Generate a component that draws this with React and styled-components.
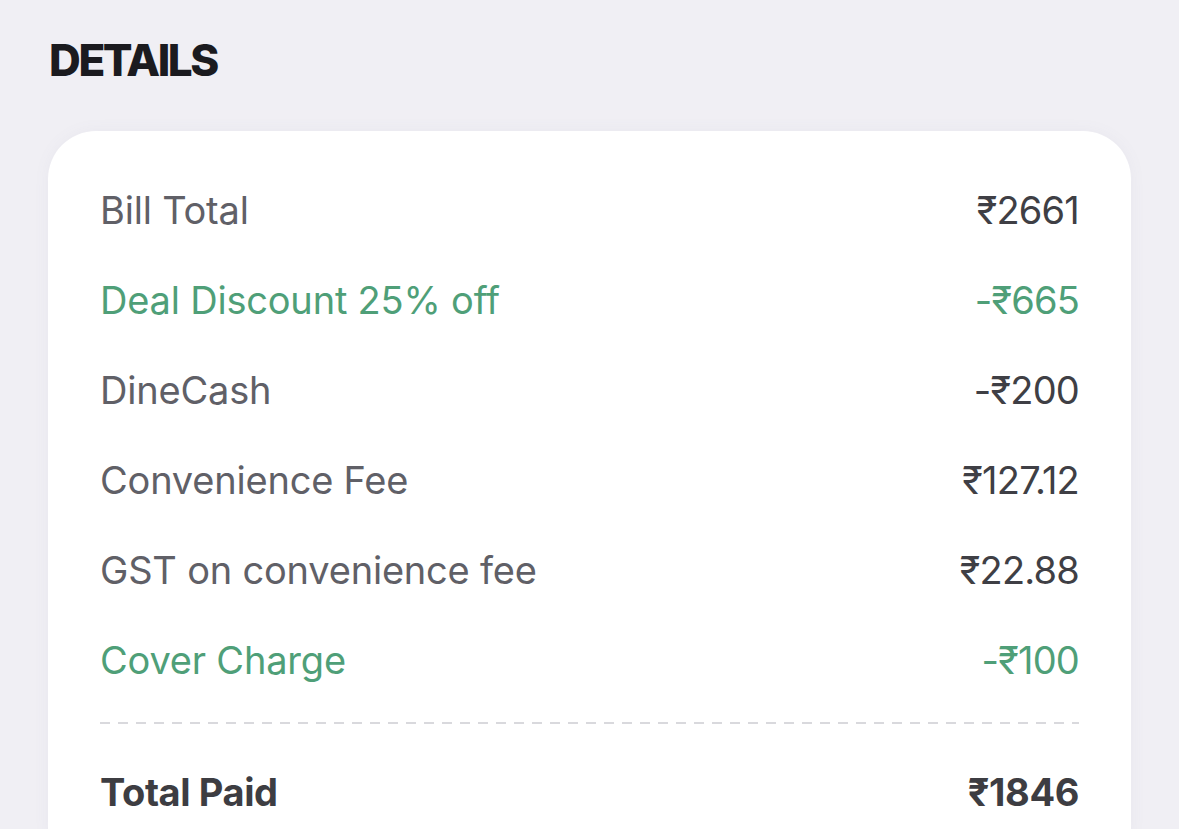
import React from 'react'
import styled, { createGlobalStyle } from 'styled-components'

const rows = [
  { label: 'Bill Total', value: '₹2661' },
  { label: 'Deal Discount 25% off', value: '-₹665', green: true },
  { label: 'DineCash', value: '-₹200' },
  { label: 'Convenience Fee', value: '₹127.12' },
  { label: 'GST on convenience fee', value: '₹22.88' },
  { label: 'Cover Charge', value: '-₹100', green: true },
]

function App() {
  return (
    <Page>
      <GlobalStyle />
      <Heading>DETAILS</Heading>
      <Card>
        {rows.map(r => (
          <Row key={r.label}>
            <Label $green={r.green}>{r.label}</Label>
            <Value $green={r.green}>{r.value}</Value>
          </Row>
        ))}
        <Divider />
        <TotalRow>
          <span>Total Paid</span>
          <span>₹1846</span>
        </TotalRow>
      </Card>
    </Page>
  )
}

export default App

const GlobalStyle = createGlobalStyle`
  html, body {
    margin: 0;
    padding: 0;
    background: #f0eff4;
    overflow: hidden;
  }
  body {
    font-family: Inter, "Noto Sans", sans-serif;
  }
`

const Page = styled.div`
  height: 829px;
  padding: 36px 48px 0 48px;
  box-sizing: border-box;
  display: flex;
  flex-direction: column;
  overflow: hidden;
`

const Heading = styled.h1`
  margin: 0 0 0 1px;
  font-size: 44px;
  font-weight: 800;
  letter-spacing: -2.4px;
  line-height: 48px;
  color: #1b1b1f;
`

const Card = styled.div`
  flex: 1;
  margin-top: 47px;
  background: #fff;
  border-radius: 48px 48px 0 0;
  padding: 34px 52px 0 52px;
  box-shadow: 0 0 16px rgba(120, 120, 150, 0.06);
`

const Row = styled.div`
  display: flex;
  justify-content: space-between;
  align-items: center;
  height: 90px;
  font-size: 38px;
  letter-spacing: -0.2px;
`

const Label = styled.span`
  color: ${p => (p.$green ? '#4f9f78' : '#606067')};
`

const Value = styled.span`
  color: ${p => (p.$green ? '#4f9f78' : '#3f3f45')};
  letter-spacing: -0.8px;
`

const Divider = styled.div`
  margin-top: 17px;
  height: 2px;
  background-image: linear-gradient(to right, #d9d9dd 0 10px, transparent 10px 18px);
  background-size: 18px 2px;
  background-repeat: repeat-x;
`

const TotalRow = styled.div`
  display: flex;
  justify-content: space-between;
  align-items: center;
  height: 90px;
  margin-top: 23px;
  font-size: 38px;
  font-weight: 700;
  letter-spacing: -0.4px;
  color: #3d3d42;
`
